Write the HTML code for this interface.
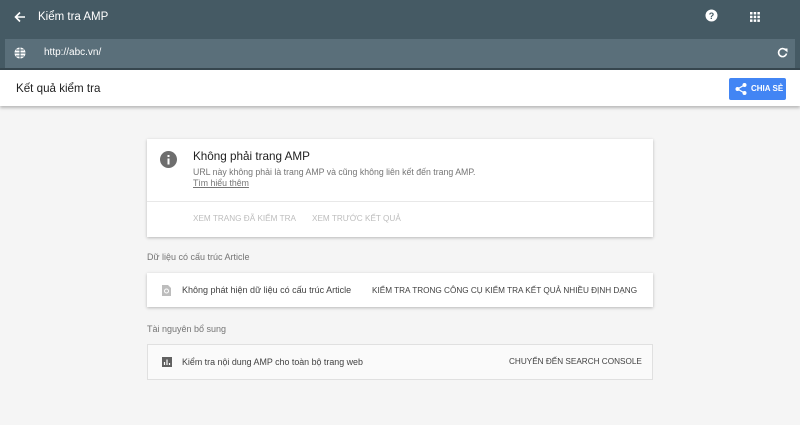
<!DOCTYPE html><html><head><meta charset="utf-8"><style>
*{margin:0;padding:0;box-sizing:border-box}
body{width:800px;height:425px;overflow:hidden;background:#f5f5f5;font-family:"Liberation Sans",sans-serif;position:relative}
.hdr{position:absolute;left:0;top:0;width:800px;height:70px;background:#455a64;border-bottom:2px solid #37474f}
.url{position:absolute;left:5px;top:39px;width:790px;height:29px;background:#5a6f7a}
.t{position:absolute;white-space:nowrap}
.res{position:absolute;left:0;top:70px;width:800px;height:36px;background:#fff;box-shadow:0 2px 3px rgba(0,0,0,.25)}
.card{position:absolute;left:147px;width:506px;background:#fff;box-shadow:0 1px 3px rgba(0,0,0,.25)}
.cap{font-size:8.2px;letter-spacing:0}
</style></head><body>
<div class="hdr"></div>
<div class="url"></div>
<svg class="t" style="left:14px;top:11px" width="12" height="12" viewBox="0 0 12 12"><path d="M11 6H2M6 1.5L1.5 6 6 10.5" stroke="#fff" stroke-width="1.6" fill="none"/></svg>
<div class="t" style="left:38px;top:11px;color:#fff;font-size:11.5px">Kiểm tra AMP</div>
<svg class="t" style="left:705px;top:9px" width="13" height="13"><circle cx="6.5" cy="6.5" r="6" fill="#fff"/><text x="6.5" y="10" font-size="9" font-weight="bold" text-anchor="middle" fill="#455a64" font-family="Liberation Sans">?</text></svg>
<svg class="t" style="left:750px;top:12px" width="10" height="10"><g fill="#fff"><rect x="0" y="0" width="2.5" height="2.5"/><rect x="3.7" y="0" width="2.5" height="2.5"/><rect x="7.4" y="0" width="2.5" height="2.5"/><rect x="0" y="3.7" width="2.5" height="2.5"/><rect x="3.7" y="3.7" width="2.5" height="2.5"/><rect x="7.4" y="3.7" width="2.5" height="2.5"/><rect x="0" y="7.4" width="2.5" height="2.5"/><rect x="3.7" y="7.4" width="2.5" height="2.5"/><rect x="7.4" y="7.4" width="2.5" height="2.5"/></g></svg>
<svg class="t" style="left:14px;top:47px" width="12" height="12"><circle cx="6" cy="6" r="5.5" fill="#fff"/><path d="M0.5 6h11M6 .5v11M2 3h8M2 9h8" stroke="#5a6f7a" stroke-width="1"/></svg>
<div class="t" style="left:44px;top:47px;color:#fff;font-size:10px">http://abc.vn/</div>
<svg class="t" style="left:777px;top:47px" width="11" height="11" viewBox="0 0 11 11"><path d="M9 3.5A4 4 0 1 0 9.5 6.5" stroke="#fff" stroke-width="1.6" fill="none"/><path d="M6.5 1.5h4v4z" fill="#fff"/></svg>
<div class="res"></div>
<div class="t" style="left:16px;top:82px;font-size:11.6px;color:#212121">Kết quả kiểm tra</div>
<div class="t" style="left:729px;top:78px;width:57px;height:22px;background:#4285f4;border-radius:2px"></div>
<svg class="t" style="left:735px;top:83px" width="12" height="12"><g fill="#fff"><circle cx="9.5" cy="2" r="2"/><circle cx="2.5" cy="6" r="2"/><circle cx="9.5" cy="10" r="2"/></g><path d="M9.5 2L2.5 6 9.5 10" stroke="#fff" stroke-width="1.2" fill="none"/></svg>
<div class="t" style="left:751px;top:84px;font-size:8px;font-weight:bold;color:#fff">CHIA SẺ</div>

<div class="card" style="top:139px;height:98px"></div>
<div class="t" style="left:147px;top:201px;width:506px;height:1px;background:#e8e8e8"></div>
<svg class="t" style="left:160px;top:151px" width="17" height="17"><circle cx="8.5" cy="8.5" r="8.5" fill="#6e6e6e"/><rect x="7.5" y="7.5" width="2" height="6" fill="#fff"/><rect x="7.5" y="4" width="2" height="2" fill="#fff"/></svg>
<div class="t" style="left:193px;top:150px;font-size:11.7px;color:#212121">Không phải trang AMP</div>
<div class="t" style="left:193px;top:167px;font-size:8.75px;color:#757575">URL này không phải là trang AMP và cũng không liên kết đến trang AMP.</div>
<div class="t" style="left:193px;top:178px;font-size:8.75px;color:#757575;text-decoration:underline">Tìm hiểu thêm</div>
<div class="t cap" style="left:193px;top:214px;color:#bdbdbd">XEM TRANG ĐÃ KIỂM TRA</div>
<div class="t cap" style="left:312px;top:214px;color:#bdbdbd">XEM TRƯỚC KẾT QUẢ</div>

<div class="t" style="left:147px;top:252px;font-size:9px;color:#757575">Dữ liệu có cấu trúc Article</div>
<div class="card" style="top:273px;height:34px"></div>
<svg class="t" style="left:162px;top:285px" width="9" height="11"><path d="M0 0h6l3 3v8H0z" fill="#bdbdbd"/><circle cx="4.5" cy="6" r="2" fill="none" stroke="#fff" stroke-width="1"/></svg>
<div class="t" style="left:182px;top:285px;font-size:9px;color:#424242">Không phát hiện dữ liệu có cấu trúc Article</div>
<div class="t cap" style="left:372px;top:286px;color:#424242">KIỂM TRA TRONG CÔNG CỤ KIỂM TRA KẾT QUẢ NHIỀU ĐỊNH DẠNG</div>

<div class="t" style="left:147px;top:324px;font-size:9px;color:#757575">Tài nguyên bổ sung</div>
<div class="t" style="left:147px;top:344px;width:506px;height:36px;background:#fafafa;border:1px solid #e0e0e0"></div>
<svg class="t" style="left:162px;top:357px" width="10" height="10"><rect width="10" height="10" fill="#616161"/><path d="M2.5 8V5M5 8V2.5M7.5 8V6" stroke="#fff" stroke-width="1.2"/></svg>
<div class="t" style="left:182px;top:357px;font-size:8.9px;color:#424242">Kiểm tra nội dung AMP cho toàn bộ trang web</div>
<div class="t cap" style="left:509px;top:357px;color:#424242">CHUYỂN ĐẾN SEARCH CONSOLE</div>
</body></html>
